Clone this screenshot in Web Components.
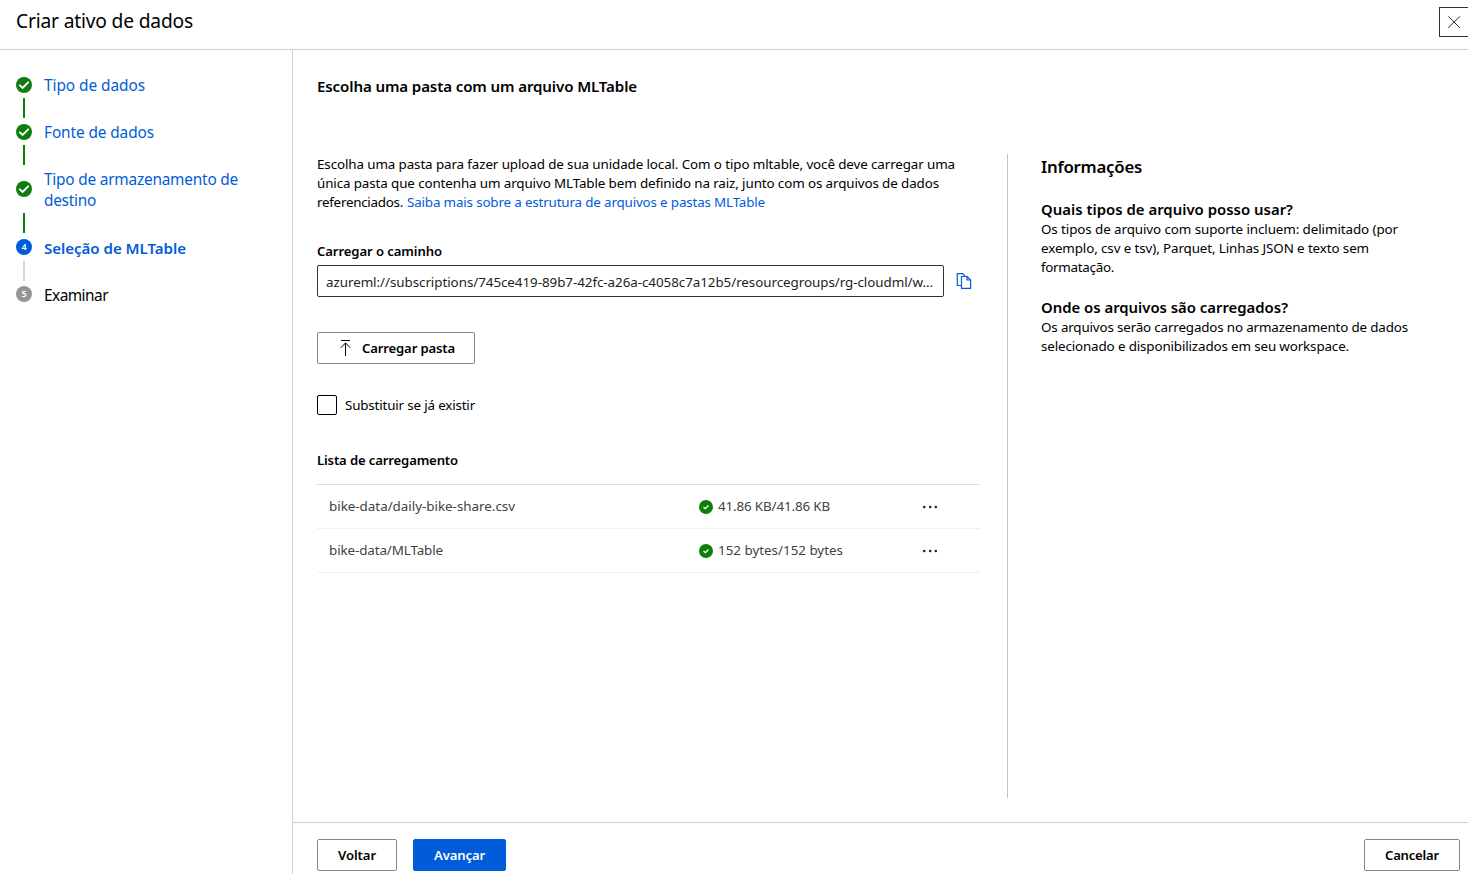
<!DOCTYPE html>
<html lang="pt-BR">
<head>
<meta charset="utf-8">
<title>Criar ativo de dados</title>
<style>
html,body{margin:0;height:100%;background:#fff;overflow:hidden}
body{font-family:"Noto Sans","Open Sans",sans-serif;color:#000}
</style>
</head>
<body>
<data-asset-wizard></data-asset-wizard>
<script>
const define = (name, html, setup) => customElements.define(name, class extends HTMLElement {
  constructor() {
    super();
    const t = document.createElement('template');
    t.innerHTML = html;
    this.attachShadow({mode: 'open'}).appendChild(t.content.cloneNode(true));
  }
  connectedCallback() { if (setup) setup(this, this.shadowRoot); }
});

// One line of text, tracked so that it fills the width given in "w".
const lines = [];
define('ui-text', `<style>:host{display:inline-block;white-space:pre;vertical-align:top}span{display:inline-block}</style><span><slot></slot></span>`,
  el => lines.push(el));
const fitLines = () => lines.forEach(el => {
  const w = +el.getAttribute('w'), n = el.textContent.length, span = el.shadowRoot.querySelector('span');
  const natural = span.getBoundingClientRect().width;
  span.style.letterSpacing = ((w - natural) / n).toFixed(3) + 'px';
  el.style.width = w + 'px';
});

define('ui-button', `<style>
:host{display:inline-flex;box-sizing:border-box;height:32px;align-items:center;justify-content:center;border:1px solid #8a8886;border-radius:2px;background:#fff;font-size:13.1px;line-height:20px;font-weight:600;color:#000}
:host([primary]){background:#015cda;border-color:#015cda;color:#fff}
</style><slot></slot>`);

define('wizard-step', `<style>
:host{display:block;font-size:15.4px;line-height:21px;color:#015cda}
:host([state=current]){font-weight:600;font-size:15.1px}
:host([state=todo]){color:#000}
.row{display:flex;gap:12px;align-items:center}
.dot{width:16px;height:16px;flex:none;border-radius:50%;background:#107c10;margin-bottom:1px;display:flex;align-items:center;justify-content:center;color:#fff;font:600 9px/16px "Noto Sans",sans-serif}
:host([tall]) .dot{margin-bottom:2px}
:host([state=current]) .dot{background:#015cda}
:host([state=todo]) .dot{background:#979593}
.label{display:flex;flex-direction:column}
:host([number]) .label{padding-top:1px;margin-bottom:-1px}
.bar{width:2px;height:20px;background:#107c10;margin:2px 0 4px 7px}
:host([state=current]) .bar{background:#d6d6d6;margin:3px 0 3px 7px}
:host([last]) .bar{display:none}
</style><div class="row"><div class="dot"></div><div class="label"><slot></slot></div></div><div class="bar"></div>`,
(el, root) => {
  const n = el.getAttribute('number');
  root.querySelector('.dot').innerHTML = n ? n : '<svg width="16" height="16" viewBox="0 0 16 16" fill="none" stroke="#fff" stroke-width="1.9"><path d="M3.3 7.9 6.6 11 12.7 4.9"/></svg>';
});

define('wizard-steps', `<style>:host{display:block;box-sizing:border-box;width:293px;border-right:1px solid #d2d0ce;padding:25px 16px}</style>
<wizard-step><ui-text w="101">Tipo de dados</ui-text></wizard-step>
<wizard-step><ui-text w="110">Fonte de dados</ui-text></wizard-step>
<wizard-step tall><ui-text w="194">Tipo de armazenamento de</ui-text><ui-text w="52">destino</ui-text></wizard-step>
<wizard-step state="current" number="4"><ui-text w="142">Seleção de MLTable</ui-text></wizard-step>
<wizard-step state="todo" number="5" last><ui-text w="64">Examinar</ui-text></wizard-step>`);

define('wizard-header', `<style>
:host{display:flex;box-sizing:border-box;height:50px;border-bottom:1px solid #d2d0ce;justify-content:space-between;padding:7px 0 0 16px;font-size:19.2px;line-height:28px}
.close{box-sizing:border-box;width:29px;height:30px;border:1px solid #323130;border-right:0;display:flex}
svg{margin:8px 0 0 8px}
</style><ui-text w="177">Criar ativo de dados</ui-text>
<div class="close"><svg width="13" height="13" fill="none" stroke="#323130"><path d="M.3.3l11.6 11.6M11.9.3L.3 11.9"/></svg></div>`);

define('path-field', `<style>
:host{display:flex;align-items:center}
.box{box-sizing:border-box;width:627px;height:32px;border:1px solid #323130;border-radius:2px;padding:6px 8px;font-size:13.4px;line-height:20px;color:#201f1e}
svg{margin-left:12px}
</style><div class="box"><slot></slot></div>
<svg width="16" height="16" fill="none" stroke="#015cda" stroke-width="1.2"><path d="M5.5 12.5H1.3V.6H6.6L9 3M5.5 3.5V15.4H14.6V7L11.2 3.5ZM11 3.5V7H14.5"/></svg>`);

define('check-option', `<style>
:host{display:flex;gap:8px;align-items:center;font-size:13.4px;line-height:20px;height:20px}
i{box-sizing:border-box;width:20px;height:20px;border:1px solid #000;border-radius:2px}
</style><i></i><slot></slot>`);

define('upload-row', `<style>
:host{display:grid;grid-template-columns:370px 223px 1fr;box-sizing:border-box;height:44px;padding-left:12px;align-items:center;border-bottom:1px solid #f1f0ef;font-size:13.4px;line-height:20px;color:#424242}
.status{display:flex;gap:5px;align-items:center}
::slotted(ui-text){margin-bottom:2px}
svg{display:block}
</style><slot name="file"></slot>
<div class="status"><svg width="14" height="15"><circle cx="7" cy="8" r="7" fill="#0b800b"/><path d="M4.5 8.1 6.3 9.7 9.5 6.5" fill="none" stroke="#fff" stroke-width="1.3"/></svg><slot name="size"></slot></div>
<svg width="16" height="4" fill="#201f1e"><circle cx="2.3" cy="2" r="1.3"/><circle cx="8.2" cy="2" r="1.3"/><circle cx="13.8" cy="2" r="1.3"/></svg>`);

define('info-panel', `<style>
:host{display:block;box-sizing:border-box;border-left:1px solid #c8c6c4;padding-left:33px;font-size:13.4px;line-height:19px;width:461px}
h2,h3{margin:0;font-weight:600}
h2{font-size:16.8px;line-height:26px;margin-bottom:19px}
h3{font-size:14.9px;line-height:20px;padding-bottom:1px}
section{display:flex;flex-direction:column;margin-bottom:20px}
</style><h2><ui-text w="101">Informações</ui-text></h2>
<section><h3><ui-text w="252">Quais tipos de arquivo posso usar?</ui-text></h3><ui-text w="357">Os tipos de arquivo com suporte incluem: delimitado (por</ui-text><ui-text w="328">exemplo, csv e tsv), Parquet, Linhas JSON e texto sem</ui-text><ui-text w="73">formatação.</ui-text></section>
<section><h3><ui-text w="247">Onde os arquivos são carregados?</ui-text></h3><ui-text w="367">Os arquivos serão carregados no armazenamento de dados</ui-text><ui-text w="308">selecionado e disponibilizados em seu workspace.</ui-text></section>`);

define('upload-form', `<style>
:host{display:flex;flex-direction:column;width:663px;font-size:13.4px;line-height:19px}
.intro{display:flex;flex-direction:column;padding-top:1px;margin-bottom:29px}
.intro>div{display:flex;gap:4px}
.link{color:#015cda}
.label{font-weight:600;font-size:13.1px;line-height:20px}
path-field{margin:4px 0 35px}
ui-button{width:158px}
ui-button svg{margin-right:9px}
check-option{margin:31px 0 35px}
.list{border-top:1px solid #e1dfdd;margin-top:14px}
</style>
<div class="intro"><ui-text w="638">Escolha uma pasta para fazer upload de sua unidade local. Com o tipo mltable, você deve carregar uma</ui-text><ui-text w="622">única pasta que contenha um arquivo MLTable bem definido na raiz, junto com os arquivos de dados</ui-text><div><ui-text w="86">referenciados.</ui-text><ui-text class="link" w="358">Saiba mais sobre a estrutura de arquivos e pastas MLTable</ui-text></div></div>
<div class="label"><ui-text w="125">Carregar o caminho</ui-text></div>
<path-field><ui-text w="607">azureml://subscriptions/745ce419-89b7-42fc-a26a-c4058c7a12b5/resourcegroups/rg-cloudml/w...</ui-text></path-field>
<ui-button><svg width="16" height="16" fill="none" stroke="#000"><path d="M4 .5h9M8.5 3v13M3.7 7.8 8.5 3l4.8 4.8"/></svg><ui-text w="93">Carregar pasta</ui-text></ui-button>
<check-option><ui-text w="130">Substituir se já existir</ui-text></check-option>
<div class="label"><ui-text w="141">Lista de carregamento</ui-text></div>
<div class="list">
<upload-row><ui-text slot="file" w="186">bike-data/daily-bike-share.csv</ui-text><ui-text slot="size" w="112">41.86 KB/41.86 KB</ui-text></upload-row>
<upload-row><ui-text slot="file" w="114">bike-data/MLTable</ui-text><ui-text slot="size" w="125">152 bytes/152 bytes</ui-text></upload-row>
</div>`);

define('wizard-footer', `<style>
:host{display:flex;box-sizing:border-box;height:52px;border-top:1px solid #d2d0ce;padding:16px 8px 0 24px;gap:16px}
.back{width:80px}.next{width:93px}.cancel{width:96px;margin-left:auto}
</style><ui-button class="back"><ui-text w="38">Voltar</ui-text></ui-button><ui-button class="next" primary><ui-text w="51">Avançar</ui-text></ui-button><ui-button class="cancel"><ui-text w="54">Cancelar</ui-text></ui-button>`);

define('data-asset-wizard', `<style>
:host{display:flex;flex-direction:column;height:874px;width:1468px}
.body{display:flex;flex:1;min-height:0}
main{flex:1;display:flex;flex-direction:column}
.page{flex:1;display:flex;flex-direction:column;padding:26px 0 24px 24px}
h1{margin:0 0 57px;font-size:15.1px;line-height:21px;font-weight:600}
.cols{display:flex;flex:1;gap:27px}
</style><wizard-header></wizard-header>
<div class="body"><wizard-steps></wizard-steps><main><div class="page"><h1><ui-text w="320">Escolha uma pasta com um arquivo MLTable</ui-text></h1><div class="cols"><upload-form></upload-form><info-panel></info-panel></div></div><wizard-footer></wizard-footer></main></div>`);

fitLines();
</script>
</body>
</html>
